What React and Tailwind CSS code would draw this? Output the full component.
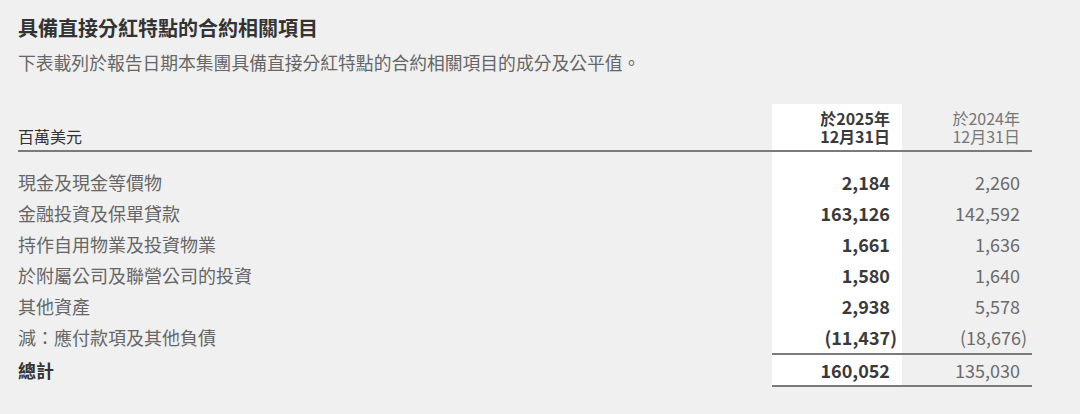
import React from "react";

const rows = [
  ["現金及現金等價物", "2,184", "2,260"],
  ["金融投資及保單貸款", "163,126", "142,592"],
  ["持作自用物業及投資物業", "1,661", "1,636"],
  ["於附屬公司及聯營公司的投資", "1,580", "1,640"],
  ["其他資產", "2,938", "5,578"],
  ["減：應付款項及其他負債", "(11,437)", "(18,676)"],
];

const font = { fontFamily: '"Noto Sans CJK TC", "Noto Sans", sans-serif' };

function Num({ v, bold }) {
  const paren = v.startsWith("(");
  return (
    <div
      className={
        "flex items-center justify-end h-full " +
        (paren ? "pr-[5px]" : "pr-[12px]")
      }
    >
      <span className={bold ? "font-bold text-[#3a3a3a]" : "text-[#6b6b6b]"}>{v}</span>
    </div>
  );
}

export default function App() {
  return (
    <div
      className="w-[1080px] h-[414px] bg-[#f0f0f0] pl-[18px] overflow-hidden"
      style={font}
    >
      <div className="pt-[14px] text-[20px] leading-[28px] font-bold text-[#333333]">
        具備直接分紅特點的合約相關項目
      </div>
      <div className="mt-[7px] text-[17.8px] leading-[26px] text-[#666666]">
        下表載列於報告日期本集團具備直接分紅特點的合約相關項目的成分及公平值。
      </div>
      <div className="mt-[29px] grid grid-cols-[754px_130px_130px] w-[1014px]">
        {/* header */}
        <div className="border-b-2 border-[#7a7a7a] flex items-end pb-[5px] text-[16px] leading-[18px] text-[#333333]">
          百萬美元
        </div>
        <div className="bg-white border-b-2 border-[#7a7a7a] pt-[5px] pb-[5px] pr-[12px] text-right text-[16px] leading-[18px] font-bold text-[#3a3a3a]">
          <p>
            於2025年
            <br />
            12月31日
          </p>
        </div>
        <div className="border-b-2 border-[#7a7a7a] pt-[5px] pb-[5px] pr-[12px] text-right text-[16px] leading-[18px] text-[#777777]">
          <p>
            於2024年
            <br />
            12月31日
          </p>
        </div>
        {/* spacer */}
        <div className="h-[15px]" />
        <div className="h-[15px] bg-white" />
        <div className="h-[15px]" />
        {rows.map(([label, a, b]) => (
          <React.Fragment key={label}>
            <div className="h-[31px] flex items-center text-[18px] text-[#666666]">{label}</div>
            <div className="h-[31px] bg-white text-[18px]">
              <Num v={a} bold />
            </div>
            <div className="h-[31px] text-[18px]">
              <Num v={b} />
            </div>
          </React.Fragment>
        ))}
        <div className="h-[34px] flex items-center text-[18px] font-bold text-[#333333]">總計</div>
        <div className="h-[34px] bg-white border-y-2 border-[#7a7a7a] text-[18px]">
          <Num v="160,052" bold />
        </div>
        <div className="h-[34px] border-y-2 border-[#7a7a7a] text-[18px]">
          <Num v="135,030" />
        </div>
      </div>
    </div>
  );
}
